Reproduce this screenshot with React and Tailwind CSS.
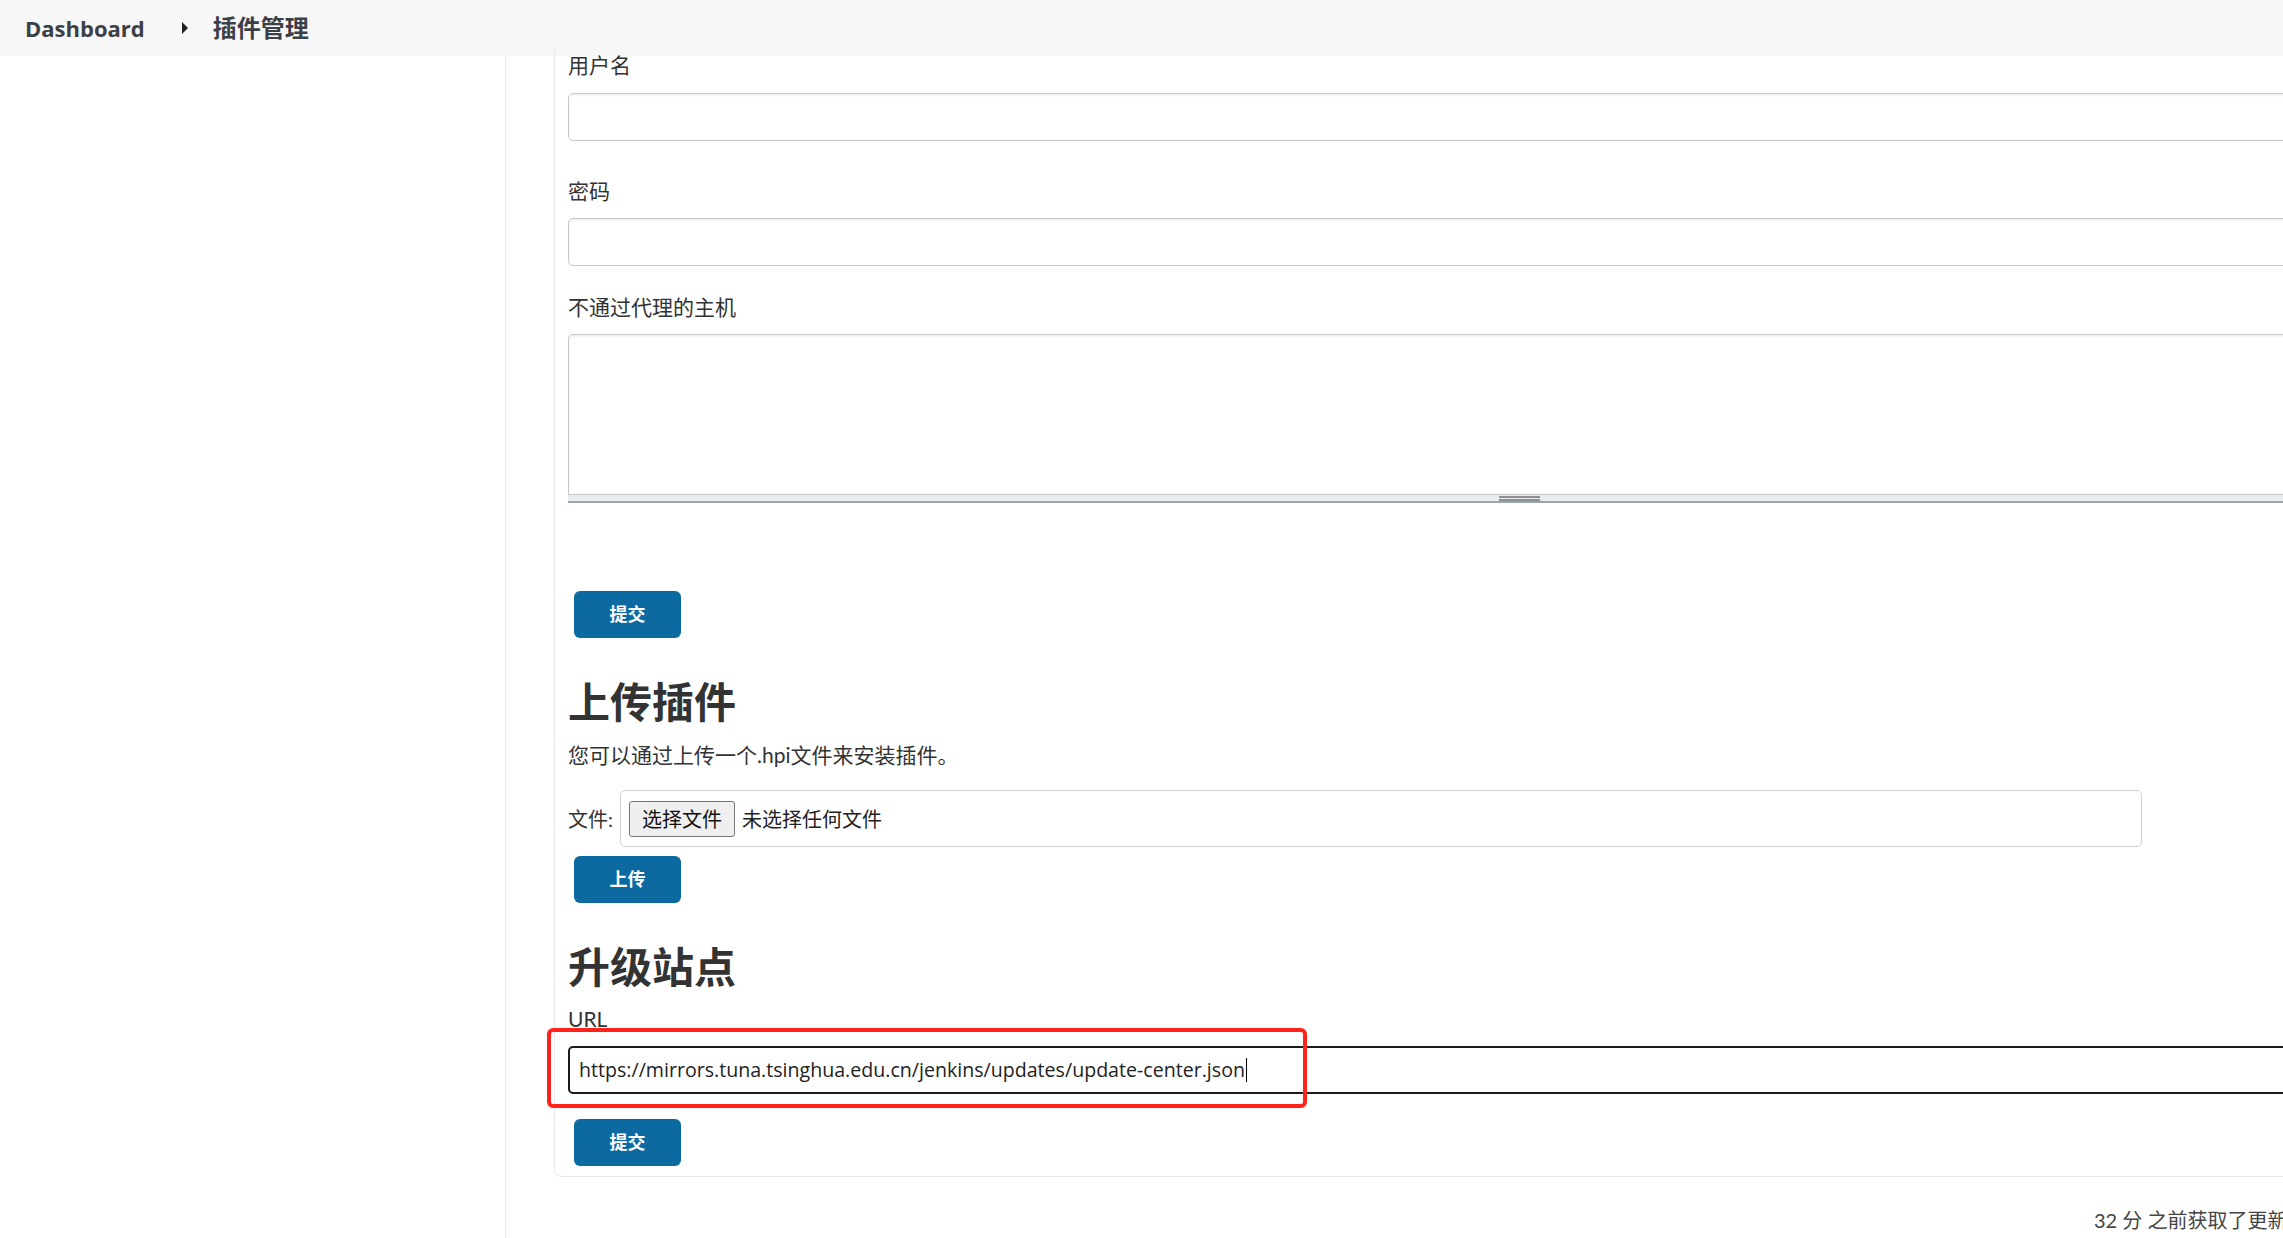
import React from "react";

const font = { fontFamily: "Lato, 'Noto Sans CJK SC', sans-serif" };
const urlFont = { fontFamily: "'Open Sans', 'Noto Sans CJK SC', sans-serif" };

const Label = ({ children, className = "" }) => (
  <div className={`text-[21px] leading-[28px] text-[#333] ${className}`}>{children}</div>
);

const TextInput = ({ className = "" }) => (
  <div
    className={`h-[48px] w-full rounded-[5px] border border-[#c8c8c8] bg-white shadow-[inset_0_2px_2px_rgba(0,0,0,0.05)] ${className}`}
  />
);

const BlueButton = ({ children, className = "" }) => (
  <button
    className={`flex h-[47px] w-[107px] items-center justify-center rounded-[6px] bg-[#0c6aa1] text-[18px] font-bold text-white ${className}`}
  >
    {children}
  </button>
);

const App = () => {
  return (
    <div className="flex h-screen w-screen flex-col overflow-hidden bg-white" style={font}>
      {/* HEADER */}
      <div className="flex h-[56px] shrink-0 items-center bg-[#f7f7f7] pl-[25px]" style={urlFont}>
        <span className="text-[22px] font-bold text-[#3b4047]">Dashboard</span>
        <svg width="7" height="12" viewBox="0 0 7 12" className="ml-[37px]">
          <polygon points="0,0 6,6 0,12" fill="#222" />
        </svg>
        <span className="ml-[24px] text-[24px] font-bold text-[#3b4047]">插件管理</span>
      </div>

      {/* BODY */}
      <div className="flex min-h-0 flex-1">
        {/* SIDEBAR */}
        <div className="w-[506px] shrink-0 border-r border-[#ececec]" />

        {/* MAIN */}
        <div className="shrink-0 pl-[48px]">
          <div className="w-[1790px] rounded-bl-[8px] border-b border-l border-[#e6e8eb] pb-[10px] pl-[13px] pr-[13px]">
            <Label className="-mt-[5px]">用户名</Label>
            <TextInput className="mt-[14px]" />

            <Label className="mt-[36px]">密码</Label>
            <TextInput className="mt-[13px]" />

            <Label className="mt-[27px]">不通过代理的主机</Label>
            <div className="mt-[13px] w-full">
              <div className="h-[160px] w-full rounded-t-[5px] border border-b-0 border-[#c8c8c8] bg-white shadow-[inset_0_2px_2px_rgba(0,0,0,0.05)]" />
              <div className="flex h-[9px] w-full items-center border-t border-b-2 border-[#c8c8c8] border-b-[#9aa4ac] bg-[#e8edf0] pl-[931px]">
                <div className="flex w-[41px] flex-col gap-[1px]">
                  <div className="h-[2px] bg-[#8e8e8e]" />
                  <div className="h-[2px] bg-[#8e8e8e]" />
                </div>
              </div>
            </div>

            <BlueButton className="ml-[6px] mt-[88px]">提交</BlueButton>

            {/* UPLOAD */}
            <h2 className="mt-[39px] text-[42px] font-bold leading-[50px] text-[#333]">上传插件</h2>
            <Label className="mt-[14px]">您可以通过上传一个.hpi文件来安装插件。</Label>

            <div className="mt-[21px] flex items-center">
              <span className="w-[52px] text-[20px] text-[#333]">文件:</span>
              <div className="flex h-[57px] w-[1522px] items-center rounded-[5px] border border-[#cfcfcf] px-[8px]">
                <span className="flex h-[36px] items-center rounded-[3px] border border-[#767676] bg-[#efefef] px-[12px] text-[20px] text-[#111]">
                  选择文件
                </span>
                <span className="ml-[7px] text-[20px] text-[#222]">未选择任何文件</span>
              </div>
            </div>

            <BlueButton className="ml-[6px] mt-[9px]">上传</BlueButton>

            {/* UPDATE SITE */}
            <h2 className="mt-[39px] text-[42px] font-bold leading-[50px] text-[#333]">升级站点</h2>
            <Label className="mt-[13px]">URL</Label>

            <div className="relative mt-[13px]">
              <div
                className="flex h-[48px] w-full items-center rounded-[5px] border-2 border-[#1a1a1a] bg-white pl-[9px] text-[19.6px] text-[#222]"
                style={urlFont}
              >
                https://mirrors.tuna.tsinghua.edu.cn/jenkins/updates/update-center.json
                <span className="ml-[1px] h-[24px] w-[1px] bg-black" />
              </div>
              {/* annotation */}
              <div className="absolute left-[-21px] top-[-18px] h-[80px] w-[760px] rounded-[6px] border-[4px] border-[#ff2419]" />
            </div>

            <BlueButton className="ml-[6px] mt-[25px]">提交</BlueButton>
          </div>

          {/* FOOTER */}
          <div className="mt-[29px] pl-[1540px] text-[20px] leading-[28px] text-[#444] whitespace-nowrap">
            32 分 之前获取了更新信息
          </div>
        </div>
      </div>
    </div>
  );
};

export default App;
